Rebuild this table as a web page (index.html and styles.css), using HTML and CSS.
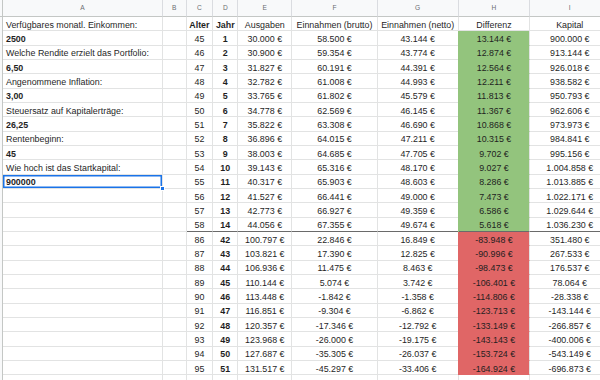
FILE: index.html
```html
<!DOCTYPE html>
<html lang="de">
<head>
<meta charset="utf-8">
<title>Kapitalplanung</title>
<link rel="stylesheet" href="styles.css">
</head>
<body>
<div class="sheet">
  <div class="hr">
    <div class="h rh"></div><div class="h">A</div><div class="h">B</div><div class="h">C</div><div class="h">D</div><div class="h">E</div><div class="h">F</div><div class="h">G</div><div class="h">H</div><div class="h">I</div>
  </div>
  <div class="r"><div class="c rh"></div><div class="c a">Verfügbares monatl. Einkommen:</div><div class="c"></div><div class="c b">Alter</div><div class="c b">Jahr</div><div class="c">Ausgaben</div><div class="c">Einnahmen (brutto)</div><div class="c">Einnahmen (netto)</div><div class="c">Differenz</div><div class="c">Kapital</div></div>
  <div class="r"><div class="c rh"></div><div class="c a b">2500</div><div class="c"></div><div class="c">45</div><div class="c b">1</div><div class="c">30.000 €</div><div class="c">58.500 €</div><div class="c">43.144 €</div><div class="c pos">13.144 €</div><div class="c">900.000 €</div></div>
  <div class="r"><div class="c rh"></div><div class="c a">Welche Rendite erzielt das Portfolio:</div><div class="c"></div><div class="c">46</div><div class="c b">2</div><div class="c">30.900 €</div><div class="c">59.354 €</div><div class="c">43.774 €</div><div class="c pos">12.874 €</div><div class="c">913.144 €</div></div>
  <div class="r"><div class="c rh"></div><div class="c a b">6,50</div><div class="c"></div><div class="c">47</div><div class="c b">3</div><div class="c">31.827 €</div><div class="c">60.191 €</div><div class="c">44.391 €</div><div class="c pos">12.564 €</div><div class="c">926.018 €</div></div>
  <div class="r"><div class="c rh"></div><div class="c a">Angenommene Inflation:</div><div class="c"></div><div class="c">48</div><div class="c b">4</div><div class="c">32.782 €</div><div class="c">61.008 €</div><div class="c">44.993 €</div><div class="c pos">12.211 €</div><div class="c">938.582 €</div></div>
  <div class="r"><div class="c rh"></div><div class="c a b">3,00</div><div class="c"></div><div class="c">49</div><div class="c b">5</div><div class="c">33.765 €</div><div class="c">61.802 €</div><div class="c">45.579 €</div><div class="c pos">11.813 €</div><div class="c">950.793 €</div></div>
  <div class="r"><div class="c rh"></div><div class="c a">Steuersatz auf Kapitalerträge:</div><div class="c"></div><div class="c">50</div><div class="c b">6</div><div class="c">34.778 €</div><div class="c">62.569 €</div><div class="c">46.145 €</div><div class="c pos">11.367 €</div><div class="c">962.606 €</div></div>
  <div class="r"><div class="c rh"></div><div class="c a b">26,25</div><div class="c"></div><div class="c">51</div><div class="c b">7</div><div class="c">35.822 €</div><div class="c">63.308 €</div><div class="c">46.690 €</div><div class="c pos">10.868 €</div><div class="c">973.973 €</div></div>
  <div class="r"><div class="c rh"></div><div class="c a">Rentenbeginn:</div><div class="c"></div><div class="c">52</div><div class="c b">8</div><div class="c">36.896 €</div><div class="c">64.015 €</div><div class="c">47.211 €</div><div class="c pos">10.315 €</div><div class="c">984.841 €</div></div>
  <div class="r"><div class="c rh"></div><div class="c a b">45</div><div class="c"></div><div class="c">53</div><div class="c b">9</div><div class="c">38.003 €</div><div class="c">64.685 €</div><div class="c">47.705 €</div><div class="c pos">9.702 €</div><div class="c">995.156 €</div></div>
  <div class="r"><div class="c rh"></div><div class="c a">Wie hoch ist das Startkapital:</div><div class="c"></div><div class="c">54</div><div class="c b">10</div><div class="c">39.143 €</div><div class="c">65.316 €</div><div class="c">48.170 €</div><div class="c pos">9.027 €</div><div class="c">1.004.858 €</div></div>
  <div class="r"><div class="c rh"></div><div class="c a b sel">900000</div><div class="c"></div><div class="c">55</div><div class="c b">11</div><div class="c">40.317 €</div><div class="c">65.903 €</div><div class="c">48.603 €</div><div class="c pos">8.286 €</div><div class="c">1.013.885 €</div></div>
  <div class="r"><div class="c rh"></div><div class="c a"></div><div class="c"></div><div class="c">56</div><div class="c b">12</div><div class="c">41.527 €</div><div class="c">66.441 €</div><div class="c">49.000 €</div><div class="c pos">7.473 €</div><div class="c">1.022.171 €</div></div>
  <div class="r"><div class="c rh"></div><div class="c a"></div><div class="c"></div><div class="c">57</div><div class="c b">13</div><div class="c">42.773 €</div><div class="c">66.927 €</div><div class="c">49.359 €</div><div class="c pos">6.586 €</div><div class="c">1.029.644 €</div></div>
  <div class="r sep"><div class="c rh"></div><div class="c a"></div><div class="c"></div><div class="c">58</div><div class="c b">14</div><div class="c">44.056 €</div><div class="c">67.355 €</div><div class="c">49.674 €</div><div class="c pos">5.618 €</div><div class="c">1.036.230 €</div></div>
  <div class="r"><div class="c rh"></div><div class="c a"></div><div class="c"></div><div class="c">86</div><div class="c b">42</div><div class="c">100.797 €</div><div class="c">22.846 €</div><div class="c">16.849 €</div><div class="c neg">-83.948 €</div><div class="c">351.480 €</div></div>
  <div class="r"><div class="c rh"></div><div class="c a"></div><div class="c"></div><div class="c">87</div><div class="c b">43</div><div class="c">103.821 €</div><div class="c">17.390 €</div><div class="c">12.825 €</div><div class="c neg">-90.996 €</div><div class="c">267.533 €</div></div>
  <div class="r"><div class="c rh"></div><div class="c a"></div><div class="c"></div><div class="c">88</div><div class="c b">44</div><div class="c">106.936 €</div><div class="c">11.475 €</div><div class="c">8.463 €</div><div class="c neg">-98.473 €</div><div class="c">176.537 €</div></div>
  <div class="r"><div class="c rh"></div><div class="c a"></div><div class="c"></div><div class="c">89</div><div class="c b">45</div><div class="c">110.144 €</div><div class="c">5.074 €</div><div class="c">3.742 €</div><div class="c neg">-106.401 €</div><div class="c">78.064 €</div></div>
  <div class="r"><div class="c rh"></div><div class="c a"></div><div class="c"></div><div class="c">90</div><div class="c b">46</div><div class="c">113.448 €</div><div class="c">-1.842 €</div><div class="c">-1.358 €</div><div class="c neg">-114.806 €</div><div class="c">-28.338 €</div></div>
  <div class="r"><div class="c rh"></div><div class="c a"></div><div class="c"></div><div class="c">91</div><div class="c b">47</div><div class="c">116.851 €</div><div class="c">-9.304 €</div><div class="c">-6.862 €</div><div class="c neg">-123.713 €</div><div class="c">-143.144 €</div></div>
  <div class="r"><div class="c rh"></div><div class="c a"></div><div class="c"></div><div class="c">92</div><div class="c b">48</div><div class="c">120.357 €</div><div class="c">-17.346 €</div><div class="c">-12.792 €</div><div class="c neg">-133.149 €</div><div class="c">-266.857 €</div></div>
  <div class="r"><div class="c rh"></div><div class="c a"></div><div class="c"></div><div class="c">93</div><div class="c b">49</div><div class="c">123.968 €</div><div class="c">-26.000 €</div><div class="c">-19.175 €</div><div class="c neg">-143.143 €</div><div class="c">-400.006 €</div></div>
  <div class="r"><div class="c rh"></div><div class="c a"></div><div class="c"></div><div class="c">94</div><div class="c b">50</div><div class="c">127.687 €</div><div class="c">-35.305 €</div><div class="c">-26.037 €</div><div class="c neg">-153.724 €</div><div class="c">-543.149 €</div></div>
  <div class="r"><div class="c rh"></div><div class="c a"></div><div class="c"></div><div class="c">95</div><div class="c b">51</div><div class="c">131.517 €</div><div class="c">-45.297 €</div><div class="c">-33.406 €</div><div class="c neg">-164.924 €</div><div class="c">-696.873 €</div></div>
  <div class="r"><div class="c rh"></div><div class="c a"></div><div class="c"></div><div class="c"></div><div class="c"></div><div class="c"></div><div class="c"></div><div class="c"></div><div class="c"></div><div class="c"></div></div>
</div>
</body>
</html>
```
FILE: styles.css
```css
html, body {
  margin: 0;
  padding: 0;
  background: #fff;
  overflow: hidden;
}
.sheet {
  width: 600px;
  height: 380px;
  overflow: hidden;
  font-family: "Liberation Sans", Arial, sans-serif;
  font-size: 8.9px;
  color: #1f1f1f;
}
.hr, .r {
  display: grid;
  grid-template-columns: 3px 160px 23.5px 26.8px 25px 54px 85.4px 81px 71.6px 80px;
}
.hr {
  height: 17px;
}
.r {
  height: 14.333px;
}
.h {
  box-sizing: border-box;
  background: #f8f9fa;
  border-right: 1px solid #dadce0;
  border-bottom: 1px solid #c4c7c5;
  color: #6b6e72;
  font-size: 6.6px;
  line-height: 16px;
  text-align: center;
}
.c {
  box-sizing: border-box;
  border-right: 1px solid #e2e3e3;
  border-bottom: 1px solid #e2e3e3;
  line-height: 10px;
  padding-top: 2.7px;
  text-align: center;
  white-space: nowrap;
  overflow: hidden;
  position: relative;
}
.rh {
  background: #f8f9fa;
  border-right: 1px solid #c4c7c5;
  border-bottom: none;
}
.h.rh {
  border-bottom: 1px solid #c4c7c5;
}
.a {
  text-align: left;
  padding-left: 3px;
}
.b {
  font-weight: bold;
}
.pos {
  background: #93c47d;
  border-bottom-color: #93c47d;
  box-shadow: -1px 0 0 #93c47d;
}
.neg {
  background: #e06666;
  border-bottom-color: #e06666;
  box-shadow: -1px 0 0 #e06666;
}
.sep .c:nth-child(n+4) {
  border-bottom: 1.5px solid #6a6a6a;
}
.sel {
  overflow: visible;
  box-shadow: inset 0 0 0 1.5px #1a73e8;
}
.sel::after {
  content: "";
  position: absolute;
  right: -3px;
  bottom: -3px;
  width: 5px;
  height: 5px;
  background: #1a73e8;
  border: 1px solid #fff;
  box-sizing: border-box;
  z-index: 2;
}
```
